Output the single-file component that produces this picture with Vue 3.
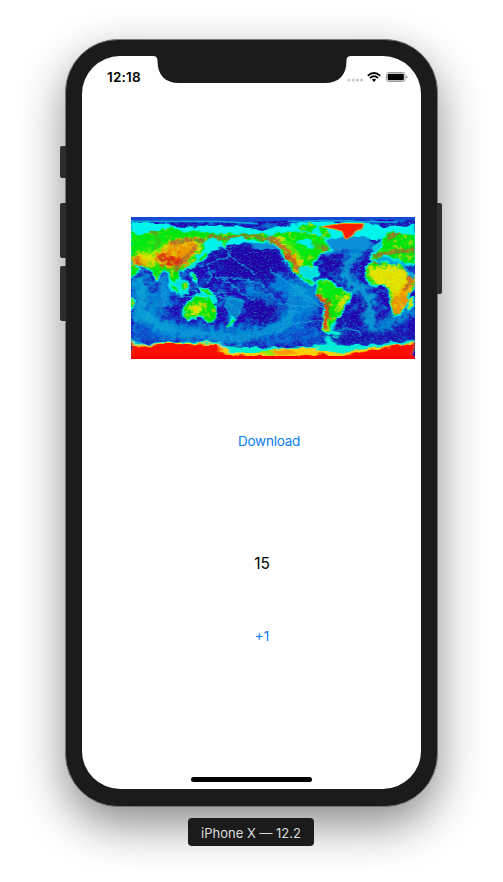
<script setup>
import { ref } from 'vue'

const count = ref(15)

// Land outlines on an 852 x 426 equirectangular canvas centred on the Pacific.
const land = [
  // Asia
  'M0 46 20 55 60 42 105 36 120 30 150 44 200 42 245 52 290 48 360 52 400 50 434 62 430 74 380 72 352 68 330 58 296 64 280 90 272 72 250 62 215 76 222 94 204 116 192 112 196 130 172 148 154 162 138 160 144 180 130 196 120 190 112 166 100 158 88 170 76 188 68 168 50 152 34 150 12 144 0 132Z',
  // Arabia and the Horn of Africa
  'M0 140 12 146 22 160 8 174 0 178Z', 'M0 244 10 248 6 268 0 274Z',
  // Japan, Philippines, Borneo, Sumatra, New Guinea, New Zealand
  'M220 112 232 104 228 116 212 130 204 132Z', 'M182 168 190 174 196 196 188 190Z',
  'M150 206 168 192 170 206 160 222 150 218Z', 'M118 200 132 210 146 226 138 226 122 212Z',
  'M206 212 224 216 246 228 250 236 228 232 214 224Z', 'M306 304 314 308 306 318 290 330 286 328 300 314Z',
  // Australia
  'M160 266 176 258 190 244 204 238 220 242 226 252 234 238 244 258 254 274 256 290 246 312 230 314 218 300 200 298 172 306 160 298Z',
  // North America
  'M417 62 440 44 480 48 520 44 560 46 578 60 584 84 600 100 572 108 560 120 548 134 538 160 532 146 512 146 500 158 504 176 520 170 516 184 534 188 550 200 538 200 510 182 488 164 474 140 456 118 448 94 430 78 417 78Z',
  'M500 30 540 18 560 30 548 44 510 46Z', 'M564 26 590 38 600 58 586 64 566 48Z',
  // South America
  'M560 192 574 186 604 196 618 212 660 230 656 246 642 264 634 284 616 302 602 320 592 346 576 338 580 300 584 260 566 244 556 226Z',
  // Africa and Europe
  'M708 150 726 136 760 134 774 144 800 142 820 148 830 176 852 176 852 204 834 226 828 254 820 272 806 290 790 296 782 268 776 240 778 222 764 204 738 206 716 196 702 174Z',
  'M720 126 728 110 744 104 756 90 752 76 764 56 784 42 812 52 852 54 852 140 820 134 800 122 786 126 770 112 754 120 740 128Z',
  'M834 250 846 240 842 268 834 276Z'
]

// Broad ridge systems crossing the ocean floor.
const ridges = [
  'M0 230Q40 190 50 168M70 220V292M0 300Q60 300 98 320T220 350 300 360 390 340 450 330 492 290 490 220 520 200',
  'M0 270Q40 290 72 320L130 360M490 230Q540 220 575 224M340 200Q400 240 450 290M417 210Q460 200 520 220',
  'M690 96Q666 124 640 144 630 180 660 198 700 220 716 240L714 310 730 350M750 346 790 300 852 270',
  'M10 180 40 220 20 290M540 120Q610 60 690 70'
]

const crests = [
  'M684 104Q666 124 646 144 636 174 662 200 700 218 716 244L714 310 722 346',
  'M0 296 60 310 98 330 150 348 230 352 310 366 400 348 450 334 486 290 484 230 520 206',
  'M98 170V280M20 176 40 220 26 262M10 250 54 300 96 350M500 224 560 274'
]

const trenches = [
  'M300 90 292 120 230 140 238 180 230 200',
  'M280 90 300 120 330 140 370 170M250 180 330 186 390 200 430 240',
  'M180 220 220 232 270 240 340 250 320 300 288 344M270 180 340 232 370 250',
  'M110 156 116 200 144 238 200 240M170 160 210 220 280 230 300 270',
  'M508 180 560 198 590 192M590 350 650 334 684 342 690 356',
  'M417 160 520 230 580 280M440 260 540 270M470 320 570 310'
]

const mountains = [
  'M60 40Q100 62 70 90M120 80Q180 60 220 72M130 160Q150 140 196 86M230 60 300 64 360 54 430 74',
  'M417 62 446 80 472 112 500 154 528 178M440 80 468 94M514 80Q560 80 590 100',
  'M728 116 754 112 800 102 852 100M768 68 790 50 804 46M724 136 754 130M842 158 836 196 820 220'
]
</script>

<template>
  <main class="stage">
    <section class="phone">
      <i class="key mute"></i><i class="key up"></i><i class="key down"></i><i class="key power"></i>
      <div class="screen">
        <svg class="notch" viewBox="0 0 200 27" aria-hidden="true">
          <path d="M0 0C4 0 5.500 1 5.500 5C5.500 19 13 27 27 27H173C187 27 194.500 19 194.500 5C194.500 1 196 0 200 0Z" fill="#1b1b1b" />
        </svg>
        <header class="status">
          <span class="time">12:18</span>
          <span class="indicators">
            <svg class="signal" viewBox="0 0 17 4"><g fill="#c9c9c9"><circle cx="2" cy="2" r="1.600" /><circle cx="6.200" cy="2" r="1.600" /><circle cx="10.400" cy="2" r="1.600" /><circle cx="14.600" cy="2" r="1.600" /></g></svg>
            <svg class="wifi" viewBox="0 0 14 10"><g fill="none" stroke="#000" stroke-width="1.900"><path d="M.8 3.700Q7-1.600 13.200 3.700" /><path d="M3 6Q7 2.500 11 6" /></g><path d="M4.800 7.600Q7 5.900 9.200 7.600L7 9.900Z" /></svg>
            <svg class="battery" viewBox="0 0 22 10"><rect x=".5" y=".5" width="18.500" height="9" rx="2.300" fill="#fff" stroke="#999" /><rect x="1.700" y="1.700" width="16.100" height="6.600" rx="1" /><path d="M20.200 3.500Q21.600 4 21.600 5T20.200 6.500Z" fill="#888" /></svg>
          </span>
        </header>

        <svg class="map" viewBox="0 0 852 426" preserveAspectRatio="none" role="img">
          <defs>
            <filter id="rough" x="0" y="0" width="852" height="426" filterUnits="userSpaceOnUse">
              <feTurbulence type="fractalNoise" baseFrequency=".055" numOctaves="4" seed="4" />
              <feDisplacementMap in="SourceGraphic" scale="16" xChannelSelector="R" yChannelSelector="G" />
            </filter>
            <filter id="streak" x="0" y="0" width="852" height="440" filterUnits="userSpaceOnUse">
              <feGaussianBlur stdDeviation="4 1" result="b" />
              <feTurbulence type="fractalNoise" baseFrequency=".03 .05" numOctaves="3" seed="3" result="n" />
              <feDisplacementMap in="b" in2="n" scale="22" xChannelSelector="R" yChannelSelector="G" />
            </filter>
            <filter id="soft" x="0" y="0" width="852" height="426" filterUnits="userSpaceOnUse">
              <feGaussianBlur stdDeviation="9" result="b" />
              <feTurbulence type="fractalNoise" baseFrequency=".06" numOctaves="4" seed="9" result="n" />
              <feDisplacementMap in="b" in2="n" scale="44" xChannelSelector="R" yChannelSelector="G" />
            </filter>
            <filter id="relief" x="0" y="0" width="852" height="426" filterUnits="userSpaceOnUse">
              <feGaussianBlur stdDeviation="5" result="b" />
              <feTurbulence type="fractalNoise" baseFrequency=".1" numOctaves="3" seed="13" result="n" />
              <feDisplacementMap in="b" in2="n" scale="40" xChannelSelector="R" yChannelSelector="G" />
            </filter>
            <filter id="seafloor" x="0" y="0" width="852" height="426" filterUnits="userSpaceOnUse" color-interpolation-filters="sRGB">
              <feTurbulence type="fractalNoise" baseFrequency=".035 .055" numOctaves="5" seed="22" />
              <feColorMatrix values="0 0 0 0 0  0 0 0 0 .55  0 0 0 0 .87  3 0 0 0 -1.300" />
            </filter>
            <filter id="grain" x="0" y="0" width="852" height="426" filterUnits="userSpaceOnUse" color-interpolation-filters="sRGB">
              <feTurbulence type="fractalNoise" baseFrequency=".2" numOctaves="2" seed="7" />
              <feColorMatrix values="0 0 0 0 .1  0 0 0 0 .7  0 0 0 0 .75  0 5 0 0 -2.700" />
            </filter>
            <filter id="highland" x="0" y="0" width="852" height="426" filterUnits="userSpaceOnUse" color-interpolation-filters="sRGB">
              <feTurbulence type="fractalNoise" baseFrequency=".07" numOctaves="4" seed="31" />
              <feColorMatrix values="0 0 0 0 .93  0 0 0 0 .83  0 0 0 0 0  0 7 0 0 -3.900" />
            </filter>
            <clipPath id="landmass"><path v-for="d in land" :key="d" :d="d" /></clipPath>
          </defs>

          <rect width="852" height="426" fill="#2400b4" />
          <rect width="852" height="426" filter="url(#seafloor)" opacity=".72" />
          <g fill="none" stroke="#0090d8" stroke-width="32" filter="url(#soft)"><path v-for="d in ridges" :key="d" :d="d" /></g>
          <g fill="#047cdc" filter="url(#soft)"><path d="M425 180 560 205 570 270 520 340 430 330 470 270Z" opacity=".75" /><path d="M0 306 250 326 470 330 620 342 852 354V384H0Z" opacity=".6" /><path d="M100 160 122 160 130 230 106 290 76 240Z" /></g>
          <g fill="#2300a8" filter="url(#soft)"><path d="M236 105 310 82 430 92 444 166 410 190 290 180Z" /><path d="M578 114 630 120 636 160 608 168 570 142Z" /><path d="M610 304 664 300 680 324 620 336Z" /><path d="M678 226 700 260 694 320 676 300Z" /><path d="M560 350 850 344 850 368 620 378Z" /><path d="M350 236 440 260 440 310 360 326Z" /></g>
          <g fill="none" stroke="#16b8d6" stroke-width="11" filter="url(#soft)" opacity=".9"><path v-for="d in crests" :key="d" :d="d" /></g>
          <rect width="852" height="426" filter="url(#grain)" opacity=".5" />

          <g filter="url(#rough)">
            <g fill="none" stroke="#14a6d8" stroke-width="4" opacity=".85"><path v-for="d in trenches" :key="d" :d="d" /></g>
            <path d="M282 238 338 246 332 282 306 330 284 342 296 300 276 264Z" fill="#08a4d6" opacity=".75" />
            <path d="M110 180 150 180 178 200 176 228 148 236 120 218Z M198 226 248 228 262 258 232 264 186 244Z M490 140 560 146 566 178 530 192 490 170Z" fill="#00dede" />
            <path d="M192 112 218 90 226 104 206 136 182 158 170 154Z" fill="#00ddd8" />
          </g>
          <g filter="url(#streak)">
            <path d="M0 12 100 22 200 30 340 28 390 42 418 36 510 16 610 12 700 16 760 28 852 20V65L440 78 400 92 340 78 280 85 260 100 220 112 194 100 0 70Z" fill="#00f4ec" />
            <path d="M350 76 400 74 450 82 436 96 370 96ZM556 92 620 60 700 56 730 80 706 104 650 92 590 116Z" fill="#078fd8" />
            <path d="M720 96 750 66 780 92 780 124 852 110V144L800 140 724 134Z" fill="#00c8de" />
            <path d="M590 300 618 310 606 344 640 350 618 362 580 350Z" fill="#00edd2" />
          </g>
          <g filter="url(#rough)">
            <g fill="#00e60b" stroke="#00f0eb" stroke-width="9" stroke-linejoin="round" paint-order="stroke"><path v-for="d in land" :key="d" :d="d" /></g>
          </g>

          <g filter="url(#rough)"><g clip-path="url(#landmass)">
            <g filter="url(#relief)">
              <path d="M66 94 120 72 200 62 212 90 160 154 90 144 0 140V118ZM420 60 450 64 486 80 512 130 512 176 466 122ZM710 156 760 144 840 150 852 290H780L780 226 728 200ZM170 270 214 256 218 290 178 296ZM630 236 655 240 636 280 616 286ZM564 210 570 240 590 260 586 346 564 340Z" fill="#e4e600" />
              <path d="M78 114 130 76 200 72 188 104 160 150 94 152ZM0 118 40 126 60 150 0 148ZM450 94 490 104 506 160 520 184 468 134ZM778 250 820 214 838 250 804 300 776 282ZM824 145H852V190L824 176ZM808 220 852 170V220Z" fill="#f09400" />
              <path d="M70 120 118 112 150 120 156 144 104 146 82 138ZM8 124 34 130 24 144ZM462 98 480 110 492 154 466 126ZM577 248 594 256 592 310 580 304Z" fill="#dc2a10" />
            </g>
            <rect width="852" height="426" filter="url(#highland)" opacity=".65" />
            <g fill="none" stroke="#b8602c" stroke-width="13" stroke-dasharray="4 2 6 1" opacity=".85"><path v-for="d in mountains" :key="d" :d="d" /></g>
            <path d="M574 200 606 198 626 226 612 242 580 244 570 222ZM460 64 560 62 580 94 516 116 470 100ZM0 52 110 46 96 94 60 112 0 100Z" fill="#00ef08" opacity=".65" filter="url(#relief)" />
            <rect width="852" height="426" filter="url(#grain)" opacity=".12" />
          </g></g>

          <g filter="url(#rough)">
            <path d="M494 76 516 62 542 66 536 80 554 84 544 100 524 90ZM560 30 574 50 560 60 540 42Z" fill="#00eee8" />
            <path d="M559 230 566 246 580 252 586 280 582 332" fill="none" stroke="#d75018" stroke-width="8" />
            <path d="M812 132 828 160 844 182M748 144 740 130 752 124 780 132 800 142" fill="none" stroke="#00a5dc" stroke-width="8" />
          </g>
          <path d="M572 29 600 24 640 19 698 20 694 35 674 42 666 54 648 66 641 64 634 43 610 36Z" fill="#ff1e00" stroke="#ffa900" stroke-width="3" />
          <g filter="url(#streak)">
            <path d="M0 370 52 384 82 372 264 376 282 388 350 398 434 392 540 386 586 382 576 354 600 362 622 382 694 386 772 378 852 372V436H0Z" fill="#00eddc" />
            <path d="M0 374 54 388 84 376 262 380 282 398 330 412 390 406 460 394 560 390 592 386 590 408 680 400 780 386 852 376V440H0Z" fill="#ffd000" />
            <path d="M0 378 56 392 82 380 260 384 272 408 330 418 440 422 550 410 610 420 700 404 790 388 852 380V440H0Z" fill="#ff0d00" />
            <path d="M280 388 420 392 400 408 310 408ZM566 388 630 382 678 394 630 406 550 402Z" fill="#00efd0" />
            <path d="M384 408 430 398 434 414 400 416Z" fill="#8bea00" />
            <path d="M417 402 480 396 500 406 440 416Z" fill="#ff9c00" />
          </g>
          <path d="M0 0H852V9L600 7 430 12 340 16 200 13 0 9Z" fill="#144bd2" /><path d="M0 13H260L380 20M470 13 610 11 800 16" fill="none" stroke="#0a9edd" stroke-width="5" />
          <path d="M0 417H852V426H0Z" fill="#f00" />
        </svg>

        <button class="link download">Download</button>
        <output class="count">{{ count }}</output>
        <button class="link increment" @click="count++">+1</button>
        <i class="home"></i>
      </div>
    </section>
    <div class="device">iPhone X — 12.2</div>
  </main>
</template>

<style>
body { background: #fff; }
</style>

<style scoped>
.stage { box-sizing: border-box; height: 882px; padding: 39px 0 0 65px; overflow: hidden; font-family: Inter, "Liberation Sans", sans-serif; }
.phone { position: relative; box-sizing: border-box; width: 373px; height: 768px; padding: 16px; border: 1px solid #777; border-radius: 53px; background: #1b1b1b; box-shadow: 0 18px 46px rgba(0, 0, 0, .46); }
.key { position: absolute; box-sizing: border-box; width: 6px; left: -6px; background: #2c2e2e; border-radius: 2px 0 0 2px; }
.mute { top: 106px; height: 32px; }
.up { top: 163px; height: 55px; }
.down { top: 226px; height: 55px; }
.power { left: auto; right: -5px; top: 163px; width: 5px; height: 91px; border-radius: 0 2px 2px 0; }
.screen { position: relative; display: flex; flex-direction: column; align-items: center; width: 339px; height: 733px; overflow: hidden; border-radius: 38px; background: #fff; }
.notch { position: absolute; top: 0; left: 70px; width: 200px; height: 27px; }
.status { box-sizing: border-box; display: flex; align-items: center; justify-content: space-between; flex: none; width: 100%; height: 41px; padding: 0 13px 0 25px; }
.time { font-size: 13.500px; font-weight: 600; line-height: 16px; letter-spacing: .2px; }
.indicators { display: flex; align-items: center; }
.signal { width: 17px; height: 4px; margin: 7px 3px 0 0; }
.wifi { width: 14px; height: 10px; margin-right: 5px; }
.battery { width: 22px; height: 10px; }
.map { flex: none; width: 284px; height: 142px; margin: 120px 0 0 43px; }
.link { border: 0; padding: 0; background: none; color: #087cf5; font: 400 13.500px/18px Inter, "Liberation Sans", sans-serif; }
.download { margin: 73px 0 0 35px; letter-spacing: -.25px; }
.count { margin: 104px 0 0 21px; font-size: 15.500px; line-height: 20px; }
.increment { margin: 53px 0 0 21px; }
.home { width: 121px; height: 5px; margin-top: auto; margin-bottom: 7px; border-radius: 3px; background: #000; }
.device { position: relative; box-sizing: border-box; display: flex; align-items: center; justify-content: center; width: 126px; height: 28px; margin: 11px 0 0 123px; padding-top: 2px; border-radius: 4px; background: #1b1b1b; color: #dedede; font-size: 13px; line-height: 18px; white-space: nowrap; }
</style>
